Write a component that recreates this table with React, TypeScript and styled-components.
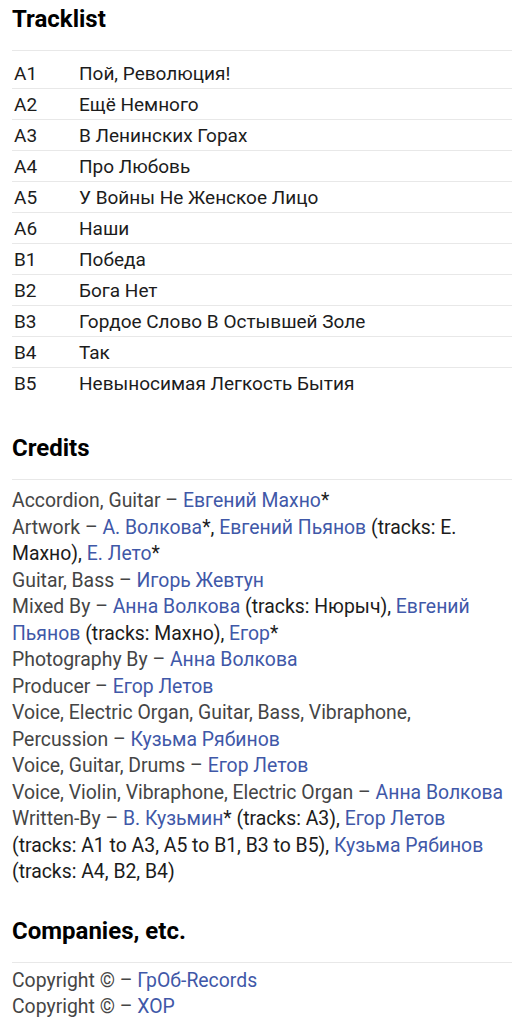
import styled, { createGlobalStyle } from "styled-components";

const GlobalStyle = createGlobalStyle`
  body {
    margin: 0;
    background: #ffffff;
    font-family: Roboto, "Noto Sans", sans-serif;
    color: #1a1a1a;
  }
`;

const Page = styled.div`
  padding: 0 16px 0 12px;
`;

const Section = styled.section<{ $after?: number }>`
  margin-bottom: ${(p) => p.$after ?? 29}px;
`;

const Heading = styled.h2`
  margin: 0;
  padding: 4px 0 16px;
  font-size: 24px;
  line-height: 30px;
  font-weight: 700;
  color: #000;
  border-bottom: 1px solid #e8e8e8;
`;

const TrackTable = styled.div`
  margin-top: 7px;
`;

const TrackRow = styled.div`
  display: grid;
  grid-template-columns: 67px 1fr;
  height: 30px;
  align-items: center;
  font-size: 19px;
  color: #1c1c1c;
  & + & {
    border-top: 1px solid #e8e8e8;
  }
`;

const Pos = styled.span`
  padding-left: 2px;
`;

const CreditList = styled.div<{ $gap?: number }>`
  margin-top: ${(p) => p.$gap ?? 8}px;
`;

const CreditLine = styled.div`
  font-size: 19.4px;
  line-height: 26.5px;
  color: #1c1c1c;
`;

const Role = styled.span`
  color: #454545;
`;

const Name = styled.span`
  color: #3f58a8;
`;

const tracks: [string, string][] = [
  ["A1", "Пой, Революция!"],
  ["A2", "Ещё Немного"],
  ["A3", "В Ленинских Горах"],
  ["A4", "Про Любовь"],
  ["A5", "У Войны Не Женское Лицо"],
  ["A6", "Наши"],
  ["B1", "Победа"],
  ["B2", "Бога Нет"],
  ["B3", "Гордое Слово В Остывшей Золе"],
  ["B4", "Так"],
  ["B5", "Невыносимая Легкость Бытия"],
];

// role text keeps its dash on the same line as the last word
const role = (text: string) => `${text}\u00a0– `;

export default function App() {
  return (
    <>
      <GlobalStyle />
      <Page>
        <Section $after={31}>
          <Heading>Tracklist</Heading>
          <TrackTable>
            {tracks.map(([pos, title]) => (
              <TrackRow key={pos}>
                <Pos>{pos}</Pos>
                <span>{title}</span>
              </TrackRow>
            ))}
          </TrackTable>
        </Section>

        <Section $after={26}>
          <Heading>Credits</Heading>
          <CreditList>
            <CreditLine>
              <Role>{role("Accordion, Guitar")}</Role>
              <Name>Евгений Махно</Name>*
            </CreditLine>
            <CreditLine>
              <Role>{role("Artwork")}</Role>
              <Name>А. Волкова</Name>*, <Name>Евгений Пьянов</Name> (tracks: Е.
              Махно), <Name>Е. Лето</Name>*
            </CreditLine>
            <CreditLine>
              <Role>{role("Guitar, Bass")}</Role>
              <Name>Игорь Жевтун</Name>
            </CreditLine>
            <CreditLine>
              <Role>{role("Mixed By")}</Role>
              <Name>Анна Волкова</Name> (tracks: Нюрыч),{" "}
              <Name>Евгений Пьянов</Name> (tracks: Махно), <Name>Егор</Name>*
            </CreditLine>
            <CreditLine>
              <Role>{role("Photography By")}</Role>
              <Name>Анна Волкова</Name>
            </CreditLine>
            <CreditLine>
              <Role>{role("Producer")}</Role>
              <Name>Егор Летов</Name>
            </CreditLine>
            <CreditLine>
              <Role>
                {role(
                  "Voice, Electric Organ, Guitar, Bass, Vibraphone, Percussion"
                )}
              </Role>
              <Name>Кузьма Рябинов</Name>
            </CreditLine>
            <CreditLine>
              <Role>{role("Voice, Guitar, Drums")}</Role>
              <Name>Егор Летов</Name>
            </CreditLine>
            <CreditLine>
              <Role>{role("Voice, Violin, Vibraphone, Electric Organ")}</Role>
              <Name>Анна Волкова</Name>
            </CreditLine>
            <CreditLine>
              <Role>{role("Written-By")}</Role>
              <Name>В. Кузьмин</Name>* (tracks: A3), <Name>Егор Летов</Name>{" "}
              (tracks: A1 to A3, A5 to B1, B3 to B5),{" "}
              <Name>Кузьма Рябинов</Name> (tracks: A4, B2, B4)
            </CreditLine>
          </CreditList>
        </Section>

        <Section>
          <Heading>Companies, etc.</Heading>
          <CreditList $gap={5}>
            <CreditLine>
              <Role>{role("Copyright ©")}</Role>
              <Name>ГрОб-Records</Name>
            </CreditLine>
            <CreditLine>
              <Role>{role("Copyright ©")}</Role>
              <Name>ХОР</Name>
            </CreditLine>
          </CreditList>
        </Section>
      </Page>
    </>
  );
}
